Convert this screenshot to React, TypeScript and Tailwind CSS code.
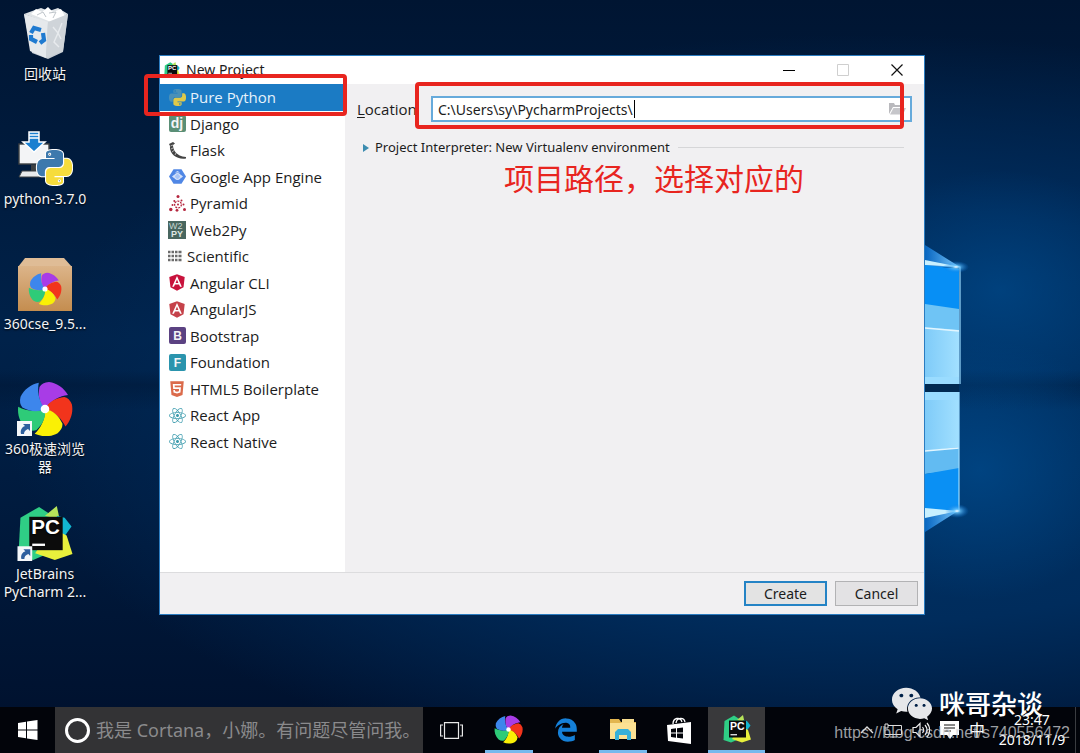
import React from "react";
import { FaAngular, FaHtml5, FaReact } from "react-icons/fa";
import { FaEdgeLegacy, FaWeixin } from "react-icons/fa6";

const SNAKE =
  "M14.25.18l.9.2.73.26.59.3.45.32.34.34.25.34.16.33.1.3.04.26.02.2-.01.13V8.5l-.05.63-.13.55-.21.46-.26.38-.3.31-.33.25-.35.19-.35.14-.33.1-.3.07-.26.04-.21.02H8.77l-.69.05-.59.14-.5.22-.41.27-.33.32-.27.35-.2.36-.15.37-.1.35-.07.32-.04.27-.02.21v3.06H3.17l-.21-.03-.28-.07-.32-.12-.35-.18-.36-.26-.36-.36-.35-.46-.32-.59-.28-.73-.21-.88-.14-1.05-.05-1.23.06-1.22.16-1.04.24-.87.32-.71.36-.57.4-.44.42-.33.42-.24.4-.16.36-.1.32-.05.24-.01h.16l.06.01h8.16v-.83H6.18l-.01-2.75-.02-.37.05-.34.11-.31.17-.28.25-.26.31-.23.38-.2.44-.18.51-.15.58-.12.64-.1.71-.06.77-.04.84-.02 1.27.05zm-6.3 1.98l-.23.33-.08.41.08.41.23.34.33.22.41.09.41-.09.33-.22.23-.34.08-.41-.08-.41-.23-.33-.33-.22-.41-.09-.41.09z";

function Snakes({ blue, yellow }: { blue: string; yellow: string }) {
  return (
    <>
      <path d={SNAKE} fill={blue} />
      <path d={SNAKE} fill={yellow} transform="rotate(180 12 12)" />
    </>
  );
}

const PETAL = "M0 0C-6-6-7-14-5.500-22Q-3-26.500 4-27C12-26 19-21 23-14C15-13 6-9 0 0Z";
const PETALS: [string, number][] = [
  ["#a83ce6", 0],
  ["#f2341c", 72],
  ["#faf005", 144],
  ["#2ecb78", 216],
  ["#3d86ec", 288],
];

function Petals() {
  return (
    <>
      {PETALS.map(([fill, angle]) => (
        <path key={angle} d={PETAL} fill={fill} transform={`rotate(${angle})`} />
      ))}
      <circle r="4.3" fill="#fff" />
    </>
  );
}

function Shortcut() {
  return (
    <g>
      <rect x="0" y="41" width="15" height="15" fill="#f4f7fa" />
      <path d="M4 54c-1-4 1-7 4-8l-2-2h7v7l-2-2c-3 1-4 3-4 5z" fill="#2d5f9e" />
    </g>
  );
}

function PyCharmShape() {
  return (
    <>
      <path d="M3 12L22 1l12 8-4 40-14 6L1 50z" fill="#2fce85" />
      <path d="M28 10L40 0l3 14z" fill="#b6e45a" />
      <path d="M40 10l8 2 7 9-10 14z" fill="#12b7d0" />
      <path d="M42 26l8 4 6 19-18 6-20-7 4-6z" fill="#e8f03c" />
      <rect x="12" y="11" width="34" height="34" fill="#0c0c0c" />
      <path d="M15 39.500h13" stroke="#fff" strokeWidth="2.400" />
      <text x="14" y="29" fontSize="21" fontWeight="700" fontFamily="'Liberation Sans', sans-serif" fill="#fff">
        PC
      </text>
    </>
  );
}

function RecycleBin() {
  return (
    <svg viewBox="0 0 56 56" className="size-14" aria-hidden="true">
      <path d="M7 9l24 8 20-8-5 38-15 7-16-6z" fill="#c7cdd3" />
      <path d="M7 9l11-4 6-2 8 3 9-3 10 6-20 9z" fill="#dfe3e6" />
      <path d="M14 9l5-5 6 3 6-5 5 5 8-3 4 7-14 6z" fill="#fff" />
      <path d="M20 10l6-3 3 5M32 8l7-1-3 6" stroke="#bfc5ca" strokeWidth="1" fill="none" />
      <path d="M7 9l24 8-2 36-16-7z" fill="#e6e9ec" />
      <path d="M31 17l20-8-5 37-17 7z" fill="#cfd4d9" />
      <path d="M36 22l5 6-4 9 5 5M45 18l-4 10 3 6" stroke="#e8ebee" strokeWidth="1.400" fill="none" />
      <g stroke="#1f7ad0" strokeWidth="4.200" fill="none">
        <path d="M14 28l3-5 7 2" />
        <path d="M26 28l1 7-4 3" />
        <path d="M20 37l-6-3v-4" />
      </g>
    </svg>
  );
}

function PythonInstaller() {
  return (
    <svg viewBox="0 0 56 56" className="size-14" aria-hidden="true">
      <rect x="2" y="14" width="30" height="20" fill="#f3f4f6" stroke="#3c4043" strokeWidth="1.400" />
      <path d="M14 35h8v6h-8z" fill="#3c4043" />
      <path d="M5 41h24l3 6H2z" fill="#e8eaec" stroke="#3c4043" />
      <path d="M12 2h10v10h6L17 22 6 12h6z" fill="#1b7fd0" stroke="#fff" strokeWidth="1.500" />
      <path d="M12 5h10M12 8h10" stroke="#fff" strokeWidth="1.400" />
      <g transform="translate(20 20) scale(1.46)">
        <g stroke="#fff" strokeWidth="1.400" strokeLinejoin="round">
          <Snakes blue="#fff" yellow="#fff" />
        </g>
        <Snakes blue="#3d79ad" yellow="#f6dc3c" />
      </g>
    </svg>
  );
}

function BrowserPackage() {
  return (
    <svg viewBox="0 0 56 56" className="size-14" aria-hidden="true">
      <defs>
        <linearGradient id="carton" x1="0" y1="0" x2="0" y2="1">
          <stop offset="0" stopColor="#dcb489" />
          <stop offset="1" stopColor="#c48d4f" />
        </linearGradient>
      </defs>
      <path d="M8 3h39l8 9H1z" fill="#dfbc96" />
      <path d="M1 11h54v45H1z" fill="url(#carton)" />
      <g transform="translate(28 34) scale(.6)">
        <Petals />
      </g>
    </svg>
  );
}

function Browser360() {
  return (
    <svg viewBox="0 0 56 56" className="size-14" aria-hidden="true">
      <g transform="translate(28 29)">
        <Petals />
      </g>
      <Shortcut />
    </svg>
  );
}

function PyCharmDesktop() {
  return (
    <svg viewBox="0 -1 56 57" className="size-14" aria-hidden="true">
      <PyCharmShape />
      <Shortcut />
    </svg>
  );
}

const shortcuts = [
  { label: "回收站", icon: <RecycleBin /> },
  { label: "python-3.7.0", icon: <PythonInstaller /> },
  { label: "360cse_9.5...", icon: <BrowserPackage /> },
  { label: "360极速浏览器", icon: <Browser360 /> },
  { label: "JetBrains PyCharm 2...", icon: <PyCharmDesktop /> },
];

function Badge({ fill, children }: { fill: string; children: React.ReactNode }) {
  return (
    <svg viewBox="0 0 17 17" className="size-[17px]" aria-hidden="true">
      <rect width="17" height="17" rx="2" fill={fill} />
      {children}
    </svg>
  );
}

function Letter({ x, y, size, children }: { x: number; y: number; size: number; children: string }) {
  return (
    <text x={x} y={y} fontSize={size} fontWeight="700" fontFamily="Liberation Sans, sans-serif" fill="#f4f4f6" textAnchor="middle">
      {children}
    </text>
  );
}

const projectTypes = [
  {
    label: "Pure Python",
    icon: (
      <svg viewBox="0 0 24 24" className="size-[17px]" aria-hidden="true">
        <Snakes blue="#4a90b8" yellow="#e0c94a" />
      </svg>
    ),
  },
  {
    label: "Django",
    icon: (
      <Badge fill="#5a8f76">
        <Letter x={8} y={13} size={14}>dj</Letter>
      </Badge>
    ),
  },
  {
    label: "Flask",
    icon: (
      <svg viewBox="0 0 17 17" className="size-[17px]" aria-hidden="true">
        <path d="M0 2l4-2 2 1.500-2 1.500c0 5 3 11 13 12v1.500C8 18 0 12 1 4z" fill="#444" />
        <path d="M1.500 4l2.500-1M2 7l2-1M3 10l2-1.500M6 13l1-2" stroke="#fff" strokeWidth=".6" />
      </svg>
    ),
  },
  {
    label: "Google App Engine",
    icon: (
      <svg viewBox="0 0 17 17" className="size-[17px]" aria-hidden="true">
        <path d="M4.500 1.200h8L17 8.500l-4.500 7.300h-8L0 8.500z" fill="#5087e5" />
        <path d="M3 8.500l2.500-2v4zM14 8.500l-2.500-2v4z" fill="#d5e2fa" />
        <circle cx="8.500" cy="8.500" r="3" fill="#a9c5f6" stroke="#e9f0fd" />
        <path d="M6 4.500h5L8.500 3z" fill="#d5e2fa" />
      </svg>
    ),
  },
  {
    label: "Pyramid",
    icon: (
      <svg viewBox="0 0 17 17" className="size-[17px]" fill="#b5273f" aria-hidden="true">
        <circle cx="9" cy="1.500" r="1.500" />
        <circle cx="1.800" cy="14.500" r="1.700" />
        <circle cx="15.500" cy="14.500" r="1.500" />
        <circle cx="8" cy="15.300" r="1.400" />
        <circle cx="5.300" cy="6" r="1" />
        <circle cx="12.500" cy="5.500" r="1" />
        <circle cx="3.500" cy="10" r="1" />
        <circle cx="14.500" cy="9.500" r="1" />
        <circle cx="9" cy="9.500" r="3.400" fill="none" stroke="#b5273f" strokeWidth="1.300" strokeDasharray="2 1" />
        <circle cx="9" cy="9.500" r="1" />
      </svg>
    ),
  },
  {
    label: "Web2Py",
    icon: (
      <svg viewBox="0 0 18 18" className="size-[18px]" aria-hidden="true">
        <rect width="18" height="18" fill="#49665f" />
        <text x="1" y="8" fontSize="9" fontFamily="Liberation Sans, sans-serif" fill="#c4d4cf">W2</text>
        <text x="3" y="16" fontSize="9" fontWeight="700" fontFamily="Liberation Sans, sans-serif" fill="#dfe8e5">PY</text>
      </svg>
    ),
  },
  {
    label: "Scientific",
    icon: (
      <svg viewBox="0 0 14 12" className="h-3 w-3.5" aria-hidden="true">
        <path d="M0 2h14M0 6h14M0 10h14" stroke="#6b6b6b" strokeWidth="2.500" strokeDasharray="2.500 1 2.500 1 2.500 1 3 1" />
      </svg>
    ),
  },
  { label: "Angular CLI", icon: <FaAngular className="size-[19px] text-[#c8123c]" /> },
  { label: "AngularJS", icon: <FaAngular className="size-[19px] text-[#c5424a]" /> },
  {
    label: "Bootstrap",
    icon: (
      <Badge fill="#5b4282">
        <Letter x={8.5} y={13} size={12}>B</Letter>
      </Badge>
    ),
  },
  {
    label: "Foundation",
    icon: (
      <Badge fill="#2a94ad">
        <Letter x={8.5} y={12.5} size={12}>F</Letter>
      </Badge>
    ),
  },
  { label: "HTML5 Boilerplate", icon: <FaHtml5 className="size-[18px] text-[#db6b4b]" /> },
  { label: "React App", icon: <FaReact className="size-[17px] text-[#3d9cae]" /> },
  { label: "React Native", icon: <FaReact className="size-[17px] text-[#3d9cae]" /> },
];

function NewProjectDialog() {
  return (
    <section
      aria-label="New Project"
      className="absolute top-[55px] right-[155px] left-[159px] flex flex-col border border-[#2b7cc0] bg-[#f1f0f2] text-[15px] text-[#1c1c1c]"
    >
      <header className="flex h-7 items-center bg-white pl-1">
        <svg viewBox="0 0 56 56" className="size-4" aria-hidden="true">
          <PyCharmShape />
        </svg>
        <h1 className="ml-1.5 flex-1 text-sm">New Project</h1>
        <button type="button" aria-label="Minimize" className="flex h-7 w-[54px] items-center justify-center">
          <svg viewBox="0 0 12 12" className="size-3" stroke="#000"><path d="M0 6.500h12" /></svg>
        </button>
        <button type="button" aria-label="Maximize" disabled className="flex h-7 w-[54px] items-center justify-center">
          <svg viewBox="0 0 12 12" className="size-3" fill="none" stroke="#cfcfcf"><path d="M.5.5h11v11H.5z" /></svg>
        </button>
        <button type="button" aria-label="Close" className="flex h-7 w-[54px] items-center justify-center">
          <svg viewBox="0 0 12 12" className="size-3" fill="none" stroke="#111" strokeWidth="1.200"><path d="M.5.5l11 11M11.500.5l-11 11" /></svg>
        </button>
      </header>

      <div className="flex min-h-[488px]">
        <nav aria-label="Project type" className="relative w-[185px] shrink-0 bg-white">
          <ul className="grid h-[371px] auto-rows-fr font-['Open_Sans','Noto_Sans',sans-serif]">
            {projectTypes.map((t, i) => (
              <li key={t.label} className="flex">
                <button
                  type="button"
                  className={
                    i === 0
                      ? "flex flex-1 items-center gap-1 bg-[#1b7bc4] pl-2 text-[#e6f2fb]"
                      : "flex flex-1 items-center gap-1 pl-2"
                  }
                >
                  <span className={t.label === "Scientific" ? "flex w-[15px]" : "flex w-[18px] justify-center"}>{t.icon}</span>
                  <span className="whitespace-nowrap">{t.label}</span>
                </button>
              </li>
            ))}
          </ul>
          <div className="pointer-events-none absolute -top-2.5 -right-0.5 -left-4 h-[42px] rounded border-4 border-[#e8251f]" />
        </nav>

        <form className="relative flex-1 px-3 pt-3" onSubmit={(e) => e.preventDefault()}>
          <div className="flex items-center">
            <label htmlFor="location" className="w-[74px] shrink-0 font-['Open_Sans','Noto_Sans',sans-serif] text-[15px]">
              <span className="underline underline-offset-2">L</span>ocation
            </label>
            <div className="relative flex flex-1">
              <input
                id="location"
                type="text"
                defaultValue="C:\Users\sy\PycharmProjects\"
                className="h-[26px] w-full min-w-0 border-2 border-[#66aadb] bg-white pr-8 pl-[5px] text-sm outline-none"
              />
              <span aria-hidden="true" className="absolute top-1 left-[203px] h-[18px] w-px bg-black" />
              <button type="button" aria-label="Browse" className="absolute top-1.5 right-1.5">
                <svg viewBox="0 0 17 13" className="h-[13px] w-[17px]" aria-hidden="true">
                  <path d="M0 12V1h5l1 2h7v2H4z" fill="#b9b9bd" />
                  <path d="M4.500 6H17l-3 6.500H1z" fill="#c6c6ca" />
                </svg>
              </button>
            </div>
          </div>
          <div className="mt-4 flex items-center pr-2 pl-1.5">
            <button type="button" aria-expanded="false" className="flex items-center gap-1.5 text-[13px] whitespace-nowrap">
              <svg viewBox="0 0 6 8" className="h-2 w-1.5" fill="#3c8cb0" aria-hidden="true"><path d="M0 0l6 4-6 4z" /></svg>
              Project Interpreter: New Virtualenv environment
            </button>
            <span className="ml-2 h-px flex-1 bg-[#d6d6d8]" />
          </div>
          <p className="pl-[147px] font-['Noto_Sans_CJK_SC',sans-serif] text-[30px] leading-[38px] whitespace-nowrap text-[#e8251f]">
            项目路径，选择对应的
          </p>
          <div className="pointer-events-none absolute -top-0.5 right-5 left-[70px] h-[47px] rounded border-4 border-[#e8251f]" />
        </form>
      </div>

      <footer className="flex justify-end gap-2 border-t border-[#dcdcde] px-1.5 py-2">
        <button type="button" className="h-[25px] w-[83px] border-2 border-[#2483c5] bg-[#e3e3e3] text-sm leading-5">Create</button>
        <button type="button" className="h-[25px] w-[83px] border border-[#b2b2b4] bg-[#e3e2e4] text-sm leading-5">Cancel</button>
      </footer>
    </section>
  );
}

function WallpaperWindow() {
  return (
    <svg viewBox="0 0 60 340" className="absolute top-[220px] right-[95px] h-[340px] w-[60px]" aria-hidden="true">
      <defs>
        <radialGradient id="flare">
          <stop offset="0" stopColor="#fff" />
          <stop offset=".25" stopColor="#6cc8ff" stopOpacity=".8" />
          <stop offset="1" stopColor="#0a78e0" stopOpacity="0" />
        </radialGradient>
        <linearGradient id="pane" x1="0" x2="1">
          <stop offset="0" stopColor="#7fcbf8" />
          <stop offset="1" stopColor="#a2e0ff" />
        </linearGradient>
        <linearGradient id="beam" x1="0" x2="1">
          <stop offset="0" stopColor="#0d7be4" stopOpacity=".7" />
          <stop offset="1" stopColor="#8bd4ff" />
        </linearGradient>
      </defs>
      <path d="M0 25L35 47H0zM0 312L33 291H0z" fill="url(#beam)" />
      <path d="M0 45l34 4v115H0z" fill="#078ff5" />
      <path d="M0 84l34 5v75H0z" fill="#6fc4f5" />
      <path d="M0 107l34 3v54H0zM0 172h34v56L0 232z" fill="url(#pane)" />
      <path d="M0 231l34-4v23L0 254z" fill="#62bbf2" />
      <path d="M0 180V157h34v23z" fill="#9adcff" />
      <path d="M0 172h34v-8H0z" fill="#012a52" />
      <path d="M0 254l34-6v43H0z" fill="#0a90f4" />
      <path d="M0 108l34 3M0 231l34-3" stroke="#e2f6ff" strokeWidth="1.500" />
      <path d="M0 42l35 5v117M34 172v119L0 291" stroke="#9cdcff" strokeWidth="1.200" fill="none" />
      <path d="M0 40l35 7L0 45zM0 288l33 3L0 298z" fill="#c8f0ff" />
      <ellipse cx="31" cy="47" rx="13" ry="6" fill="url(#flare)" />
      <ellipse cx="32" cy="291" rx="12" ry="7" fill="url(#flare)" />
    </svg>
  );
}

function Taskbar() {
  return (
    <footer className="relative flex h-[46px] items-stretch bg-[#02040a] text-white">
      <button type="button" aria-label="Start" className="flex w-[55px] items-center justify-center">
        <svg viewBox="0 0 20 20" className="size-5" fill="#fff" aria-hidden="true">
          <path d="M0 3l8-1.200v7.700H0zM9 1.600L19.500 0v9.500H9zM0 10.500h8v7.700L0 17zM9 10.500h10.500V20L9 18.400z" />
        </svg>
      </button>
      <label className="flex w-[368px] items-center gap-1.5 bg-[#333335] pl-2.5">
        <span className="size-[25px] shrink-0 rounded-full border-[3px] border-white" />
        <input
          type="text"
          aria-label="Cortana"
          placeholder="我是 Cortana，小娜。有问题尽管问我。"
          className="min-w-0 flex-1 bg-transparent text-[18px] outline-none placeholder:text-[#8a8a8c]"
        />
      </label>
      <button type="button" aria-label="Task view" className="flex w-[57px] items-center justify-center">
        <svg viewBox="0 0 23 17" className="h-[17px] w-[23px]" fill="none" stroke="#e8e8e8" strokeWidth="1.200" aria-hidden="true">
          <path d="M4.500.6h14v15.800h-14zM3 3H.6v11H3M20 3h2.400v11H20" />
        </svg>
      </button>
      <button type="button" aria-label="360" className="flex w-[57px] flex-col items-center justify-between pt-2">
        <svg viewBox="-28 -28 56 56" className="size-[29px]" aria-hidden="true"><Petals /></svg>
        <span className="h-[3px] w-12 bg-[#76b9ed]" />
      </button>
      <button type="button" aria-label="Edge" className="flex w-[57px] items-center justify-center">
        <FaEdgeLegacy className="size-6 text-[#1580d8]" />
      </button>
      <button type="button" aria-label="Explorer" className="flex w-[57px] flex-col items-center justify-between pt-2.5">
        <svg viewBox="0 0 26 24" className="h-6 w-[26px]" aria-hidden="true">
          <path d="M0 2h9l2 3h15v17H0z" fill="#e3b64f" />
          <path d="M12 2h12v5H12z" fill="#f7dd8f" />
          <path d="M0 6h26v16H0z" fill="#fce193" />
          <path d="M5 23v-8l3-3h10l3 3v8h-4v-5H9v5z" fill="#37b0d8" />
        </svg>
        <span className="h-[3px] w-12 bg-[#76b9ed]" />
      </button>
      <button type="button" aria-label="Store" className="flex w-[57px] items-center justify-center">
        <svg viewBox="0 0 25 27" className="h-[27px] w-[25px]" aria-hidden="true">
          <path d="M0 8l24-3v22L1 24z" fill="#fff" />
          <path d="M6 7c0-6 7-8 9-2M9 6c1-6 8-6 9-1" fill="none" stroke="#fff" strokeWidth="1.300" />
          <path d="M4 12l5-.7v4.200H4zM10 11.200l6-.8v5.100h-6zM4 16.500h5v4.200L4 20zM10 16.500h6v5.100l-6-.8z" fill="#02040a" />
        </svg>
      </button>
      <button type="button" aria-label="PyCharm" className="flex w-[57px] flex-col items-center justify-between bg-[#39393b] pt-2">
        <svg viewBox="0 0 56 56" className="size-7" aria-hidden="true"><PyCharmShape /></svg>
        <span className="h-[3px] w-full bg-[#76b9ed]" />
      </button>

      <div className="ml-auto flex items-center">
        <div className="flex items-center gap-2.5">
          <svg viewBox="0 0 14 8" className="h-2 w-3.5" fill="none" stroke="#ddd" strokeWidth="1.400" aria-hidden="true"><path d="M1 7l6-6 6 6" /></svg>
          <svg viewBox="0 0 18 15" className="h-[15px] w-[18px]" fill="none" stroke="#ddd" aria-hidden="true"><path d="M4 2.500h13.500v9H1V5M1 1v4h3V1zM6 14h7" /></svg>
          <svg viewBox="0 0 18 16" className="h-4 w-[18px]" fill="none" stroke="#eee" strokeWidth="1.200" aria-hidden="true"><path d="M1 5.500h3l4-4v13l-4-4H1zM10.500 5c1.500 2 1.500 4 0 6M13 3c2.500 3 2.500 7 0 10M15 1c3.500 4 3.500 10 0 14" /></svg>
          <svg viewBox="0 0 19 18" className="h-[18px] w-[19px]" aria-hidden="true"><path d="M0 0h19v14h-6l-3 4-3-4H0z" fill="#fff" /><path d="M4 4h11M4 7h11M4 10h7" stroke="#111" /></svg>
          <span className="text-base">中</span>
        </div>
        <div className="mr-2 ml-3 w-[70px] text-center text-sm leading-5">
          <time>23:47</time>
          <br />
          <time>2018/11/9</time>
        </div>
        <span className="mr-1 h-full w-px bg-[#3a3c40]" />
      </div>
    </footer>
  );
}

export default function App() {
  return (
    <div className="relative flex min-h-screen flex-col overflow-hidden bg-[#001a3c] bg-[radial-gradient(ellipse_160px_120px_at_1000px_290px,#00498ab0_0%,transparent_100%),radial-gradient(ellipse_150px_130px_at_980px_470px,#00498ac0_0%,transparent_100%),linear-gradient(180deg,transparent_370px,#00143066_385px,transparent_410px),radial-gradient(ellipse_860px_380px_at_80%_55%,#003468_0%,#002c5c_55%,transparent_100%),linear-gradient(180deg,#001532_0%,#00224a_45%,#00102c_100%)] font-['Noto_Sans','Noto_Sans_CJK_SC',sans-serif]">
      <main className="relative flex-1">
        <WallpaperWindow />
        <ul className="w-[90px] pt-[5px]">
          {shortcuts.map((s) => (
            <li key={s.label} className="h-[125px]">
              <button type="button" className="flex w-full flex-col items-center gap-1 text-sm leading-[18px] text-[#f2f4f7] [text-shadow:0_1px_2px_#000]">
                {s.icon}
                <span>{s.label}</span>
              </button>
            </li>
          ))}
        </ul>
        <NewProjectDialog />
      </main>
      <Taskbar />
      <div className="pointer-events-none absolute right-[37px] bottom-7 flex items-center gap-1.5">
        <FaWeixin className="size-[42px] text-[#e6e7ea]" />
        <span className="text-[26px] leading-[42px] font-medium text-white">咪哥杂谈</span>
      </div>
      <p className="pointer-events-none absolute right-2.5 bottom-2 font-['Liberation_Sans',sans-serif] text-base text-[#d0d2d6]/75">
        https://blog.csdn.net/s740556472
      </p>
    </div>
  );
}
